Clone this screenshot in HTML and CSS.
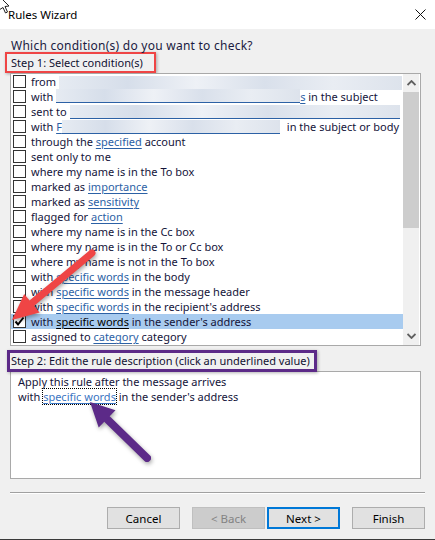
FILE: index.html
```html
<!DOCTYPE html>
<html lang="en">
<head>
    <meta charset="UTF-8">
    <title>Rules Wizard</title>
    <link rel="stylesheet" href="styles.css">
</head>
<body>
    <div class="titlebar">
        <svg class="cursor" width="12" height="20" viewBox="0 0 12 20">
            <path d="M-1 -4 L9 6 L5 6.5 L7.5 12 L5.5 13 L3 7.5 L-1 10 Z" fill="#fff" stroke="#222" stroke-width="1"/>
        </svg>
        <span class="title">Rules Wizard</span>
        <svg class="close" width="11" height="11" viewBox="0 0 11 11">
            <path d="M0.5 0.5 L10.5 10.5 M10.5 0.5 L0.5 10.5" stroke="#111" stroke-width="1"/>
        </svg>
    </div>

    <div class="wizard">
        <p class="prompt">Which condition(s) do you want to check?</p>
        <div class="step-label step-one">Step 1: Select condition(s)</div>

        <div class="listbox">
            <ul class="conditions">
                <li><span class="box"></span>from&nbsp;<span class="blur blur-from"></span></li>
                <li><span class="box"></span>with&nbsp;<span class="blur blur-with"></span><span class="link">s</span>&nbsp;in the subject</li>
                <li><span class="box"></span>sent to&nbsp;<span class="blur blur-sent"></span></li>
                <li><span class="box"></span>with&nbsp;<span class="link">F</span><span class="blur blur-body"></span><span class="gap"></span>in the subject or body</li>
                <li><span class="box"></span>through the&nbsp;<span class="link">specified</span>&nbsp;account</li>
                <li><span class="box"></span>sent only to me</li>
                <li><span class="box"></span>where my name is in the To box</li>
                <li><span class="box"></span>marked as&nbsp;<span class="link">importance</span></li>
                <li><span class="box"></span>marked as&nbsp;<span class="link">sensitivity</span></li>
                <li><span class="box"></span>flagged for&nbsp;<span class="link">action</span></li>
                <li><span class="box"></span>where my name is in the Cc box</li>
                <li><span class="box"></span>where my name is in the To or Cc box</li>
                <li><span class="box"></span>where my name is not in the To box</li>
                <li><span class="box"></span>with&nbsp;<span class="link">specific words</span>&nbsp;in the body</li>
                <li><span class="box"></span>with&nbsp;<span class="link">specific words</span>&nbsp;in the message header</li>
                <li><span class="box"></span>with&nbsp;<span class="link">specific words</span>&nbsp;in the recipient's address</li>
                <li class="selected">
                    <span class="box">
                        <svg width="11" height="11" viewBox="0 0 11 11"><path d="M1.5 5.5 L4 8.5 L9.5 1.5" fill="none" stroke="#000" stroke-width="2"/></svg>
                    </span>with&nbsp;<span class="link">specific words</span>&nbsp;in the sender's address
                </li>
                <li><span class="box"></span>assigned to&nbsp;<span class="link">category</span>&nbsp;category</li>
            </ul>
            <div class="scrollbar">
                <div class="arrow">
                    <svg width="9" height="6" viewBox="0 0 9 6"><path d="M0.5 5 L4.5 1 L8.5 5" fill="none" stroke="#606060" stroke-width="1.8"/></svg>
                </div>
                <div class="thumb"></div>
                <div class="track"></div>
                <div class="arrow">
                    <svg width="9" height="6" viewBox="0 0 9 6"><path d="M0.5 1 L4.5 5 L8.5 1" fill="none" stroke="#606060" stroke-width="1.8"/></svg>
                </div>
            </div>
        </div>

        <div class="step-label step-two">Step 2: Edit the rule description (click an underlined value)</div>
        <div class="description">
            <p>Apply this rule after the message arrives</p>
            <p>with <span class="focus"><span class="link">specific words</span></span> in the sender's address</p>
        </div>

        <div class="separator"></div>

        <div class="buttons">
            <button class="btn">Cancel</button>
            <button class="btn btn-back" disabled>&lt; Back</button>
            <button class="btn btn-next">Next &gt;</button>
            <button class="btn btn-finish">Finish</button>
        </div>
    </div>
    <div class="frame-edge"></div>

    <!-- annotation arrows drawn over the dialog -->
    <svg class="annotations" width="435" height="540" viewBox="0 0 435 540">
        <g class="arrow-red">
            <line x1="92" y1="253" x2="32" y2="303" stroke="#ef4545" stroke-width="7" stroke-linecap="round"/>
            <polygon points="24.2,294.1 12,320 39.6,312.5" fill="#ef4545"/>
        </g>
        <g class="arrow-purple">
            <line x1="147" y1="458" x2="108" y2="420" stroke="#5c2a88" stroke-width="8" stroke-linecap="round"/>
            <polygon points="115.5,410.3 90,402 98.7,427.4" fill="#5c2a88"/>
        </g>
    </svg>
</body>
</html>
```

FILE: styles.css
```css
* {
    box-sizing: border-box;
    margin: 0;
    padding: 0;
}

body {
    position: relative;
    width: 435px;
    height: 540px;
    overflow: hidden;
    font-family: "Noto Sans", "Open Sans", sans-serif;
    font-size: 11px;
    color: #000;
    background: #f0f0f0;
}

.titlebar {
    position: relative;
    height: 29px;
    display: flex;
    align-items: center;
    padding: 0 9px 1px 8px;
    background: #fff;
}

.title {
    flex: 1;
    font-size: 11.5px;
}

.cursor {
    position: absolute;
    left: 0;
    top: 0;
}

.close {
    margin-top: 1px;
}

.wizard {
    padding: 0 10px;
}

.prompt {
    margin: 9px 0 0 1px;
    font-size: 12px;
    letter-spacing: 0.25px;
    line-height: 15px;
    color: #1a1a40;
}

.step-label {
    display: block;
    width: fit-content;
    line-height: 17px;
    color: #101030;
}

.step-one {
    margin: -1px 0 0 -5px;
    padding: 0 11px 0 4px;
    border: 2px solid #ef4545;
    box-shadow: 1px 1px 3px rgba(0, 0, 0, 0.3);
}

.listbox {
    display: flex;
    height: 273px;
    margin-right: 4px;
    border: 1px solid #a9a9a9;
    background: #fff;
}

.conditions {
    flex: 1;
    list-style: none;
    overflow: hidden;
}

.conditions li {
    display: flex;
    align-items: center;
    height: 15px;
    white-space: nowrap;
    color: #14143a;
}

.conditions li.selected {
    background: #a8cbef;
}

.box {
    flex: none;
    display: flex;
    align-items: center;
    justify-content: center;
    width: 13px;
    height: 13px;
    margin: 0 5px 0 2px;
    border: 1px solid #333;
    background: #fff;
}

.link {
    color: #2c61a5;
    text-decoration: underline;
    text-underline-offset: 2px;
}

.selected .link {
    color: #000;
}

.blur {
    display: inline-block;
    height: 14px;
    background: linear-gradient(90deg, #e6ebf2, #d6deea 20%, #eef1f6 40%, #d9e0eb 60%, #e9edf3 80%, #dde3ec);
}

.blur-from {
    width: 343px;
    margin-top: 2px;
}

.blur-with,
.blur-sent,
.blur-body {
    border-bottom: 1px solid #2c61a5;
}

.blur-with {
    width: 244px;
    margin-top: -2px;
}

.blur-sent {
    width: 330px;
}

.blur-body {
    width: 218px;
}

.gap {
    display: inline-block;
    width: 7px;
}

.scrollbar {
    display: flex;
    flex-direction: column;
    width: 16px;
    margin-right: 1px;
    background: #f0f0f0;
}

.arrow {
    height: 18px;
    display: flex;
    align-items: center;
    justify-content: center;
}

.thumb {
    height: 136px;
    background: #cdcdcd;
}

.track {
    flex: 1;
}

.step-two {
    position: relative;
    margin: 4px 0 -1px -3px;
    padding: 0 4px 0 1px;
    border: 3px solid #5c2a88;
    line-height: 16px;
    box-shadow: 1px 1px 3px rgba(0, 0, 0, 0.3);
}

.description {
    height: 108px;
    margin-right: 4px;
    padding: 2px 7px;
    border: 1px solid #a9a9a9;
    background: #fff;
    color: #14143a;
}

.description p {
    line-height: 15px;
}

.focus {
    outline: 1px dotted #000;
}

.description .link {
    color: #3b74c2;
}

.separator {
    height: 2px;
    margin-top: 13px;
    border-top: 1px solid #a0a0a0;
    border-bottom: 1px solid #fff;
}

.buttons {
    display: flex;
    justify-content: flex-end;
    margin-top: 13px;
}

.btn {
    width: 73px;
    height: 22px;
    font-family: inherit;
    font-size: 11.5px;
    color: #000;
    background: #e1e1e1;
    border: 1px solid #adadad;
}

.btn-back {
    margin-left: 12px;
    color: #838383;
    background: #cccccc;
    border-color: #bfbfbf;
}

.btn-next {
    margin-left: 2px;
    border: 2px solid #0078d7;
}

.btn-finish {
    margin-left: 12px;
}

.frame-edge {
    height: 1px;
    margin-top: 10px;
    background: #3a3a3a;
}

.annotations {
    position: absolute;
    left: 0;
    top: 0;
    pointer-events: none;
}

.arrow-red,
.arrow-purple {
    filter: drop-shadow(1px 2px 2px rgba(0, 0, 0, 0.35));
}
```
